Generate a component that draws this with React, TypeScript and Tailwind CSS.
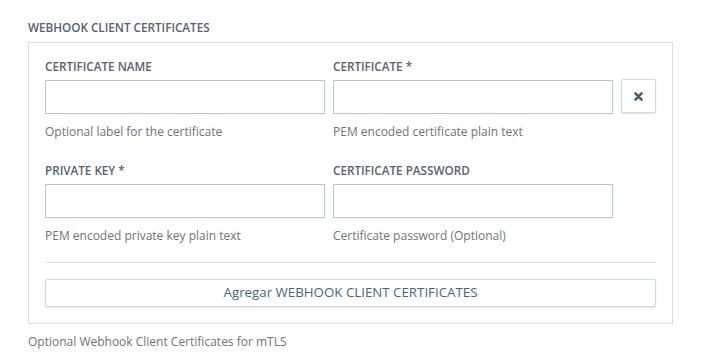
import React from 'react';

const font = { fontFamily: '"Open Sans", "Noto Sans", sans-serif' };

const Field: React.FC<{ label: string; help: React.ReactNode; top?: string }> = ({ label, help, top = 'mt-0' }) => (
  <div className={`flex flex-col ${top}`}>
    <label className="text-[11.7px] leading-[18px] font-semibold text-[#566270] uppercase">{label}</label>
    <input className="mt-[5px] h-[34px] w-[280px] border border-[#b9c6cf] bg-white outline-none" />
    <p className="mt-[9px] text-[12px] leading-[18px] text-[#6f7378]">{help}</p>
  </div>
);

export default function App() {
  return (
    <div className="w-[718px] h-[361px] bg-white pl-[28px] pt-[18px]" style={font}>
      <h3 className="text-[11.7px] leading-[18px] font-semibold text-[#566270]">WEBHOOK CLIENT CERTIFICATES</h3>
      <div className="mt-[6px] w-[645px] border border-[#dcdcdc] px-[16px] pt-[14px] pb-[16px]">
        <div className="grid grid-cols-[280px_280px_35px] gap-x-[8px]">
          <Field label="Certificate Name" help="Optional label for the certificate" />
          <Field label="Certificate *" help="PEM encoded certificate plain text" />
          <div className="pt-[22px]">
            <button className="flex h-[34px] w-[35px] items-center justify-center rounded-[2px] border border-[#cfdae1] bg-white shadow-[0_1px_2px_rgba(0,0,0,0.12)]">
              <svg width="9" height="9" viewBox="0 0 10 10">
                <path d="M1.6 1.6 L8.4 8.4 M8.4 1.6 L1.6 8.4" stroke="#3f5f78" strokeWidth="2.8" strokeLinecap="round" />
              </svg>
            </button>
          </div>
          <Field label="Private Key *" top="mt-[20px]" help="PEM encoded private key plain text" />
          <Field label="Certificate Password" top="mt-[20px]" help="Certificate password (Optional)" />
        </div>
        <div className="mt-[17px] border-t border-[#dfe3e6]" />
        <button className="mt-[16px] h-[28px] w-full rounded-[2px] border border-[#cddae2] bg-white text-[13.3px] text-[#3e6985] shadow-[0_1px_2px_rgba(0,0,0,0.1)]">
          Agregar WEBHOOK CLIENT CERTIFICATES
        </button>
      </div>
      <p className="mt-[9px] text-[12px] leading-[18px] text-[#6f7378]">Optional Webhook Client Certificates for mTLS</p>
    </div>
  );
}
